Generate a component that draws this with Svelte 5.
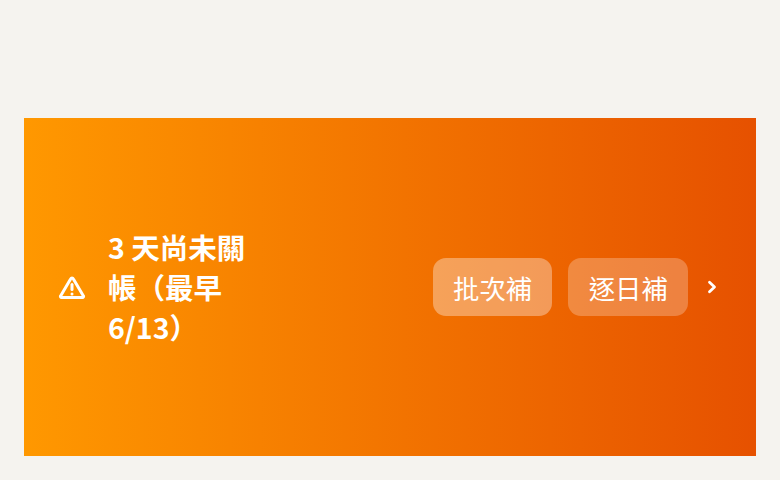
<script lang="ts">
    let days = 3;
    let earliest = "6/13";
</script>

<div class="page">
    <div class="banner">
        <svg class="warn" viewBox="0 0 32 32" width="32" height="32" fill="none" stroke="currentColor" stroke-width="3" stroke-linecap="round" stroke-linejoin="round">
            <path d="M14.6 7.9a1.6 1.6 0 0 1 2.8 0l10 17a1.1 1.1 0 0 1-1 1.7H5.6a1.1 1.1 0 0 1-1-1.7z" />
            <path d="M16 13.5v5" />
            <path d="M16 23h.01" />
        </svg>
        <div class="message">{days} 天尚未關帳（最早 {earliest}）</div>
        <div class="actions">
            <button class="btn primary">批次補</button>
            <button class="btn">逐日補</button>
        </div>
        <svg class="chevron" viewBox="0 0 24 24" width="24" height="24" fill="none" stroke="currentColor" stroke-width="2.8" stroke-linecap="round" stroke-linejoin="round">
            <path d="M9.5 7.2 14.5 12 9.5 16.8" />
        </svg>
    </div>
</div>

<style>
    :global(body) {
        background: #f5f3ef;
    }
    .page {
        padding: 118px 24px 24px;
        font-family: "Noto Sans CJK TC", "Noto Sans", sans-serif;
    }
    .banner {
        height: 338px;
        box-sizing: border-box;
        padding: 0 32px;
        display: flex;
        align-items: center;
        gap: 20px;
        color: #fff;
        background: linear-gradient(90deg, #ff9800, #e65100);
    }
    .warn {
        flex: none;
    }
    .message {
        width: 140px;
        font-size: 28.5px;
        font-weight: 700;
        line-height: 40px;
    }
    .actions {
        margin-left: auto;
        display: flex;
        gap: 16px;
    }
    .btn {
        height: 58px;
        padding: 0 20.2px;
        border: 0;
        border-radius: 13px;
        font: inherit;
        font-size: 26.4px;
        color: #fff;
        background: rgba(255, 255, 255, 0.25);
    }
    .primary {
        background: rgba(255, 255, 255, 0.35);
    }
    .chevron {
        flex: none;
        margin-left: -8px;
    }
</style>
